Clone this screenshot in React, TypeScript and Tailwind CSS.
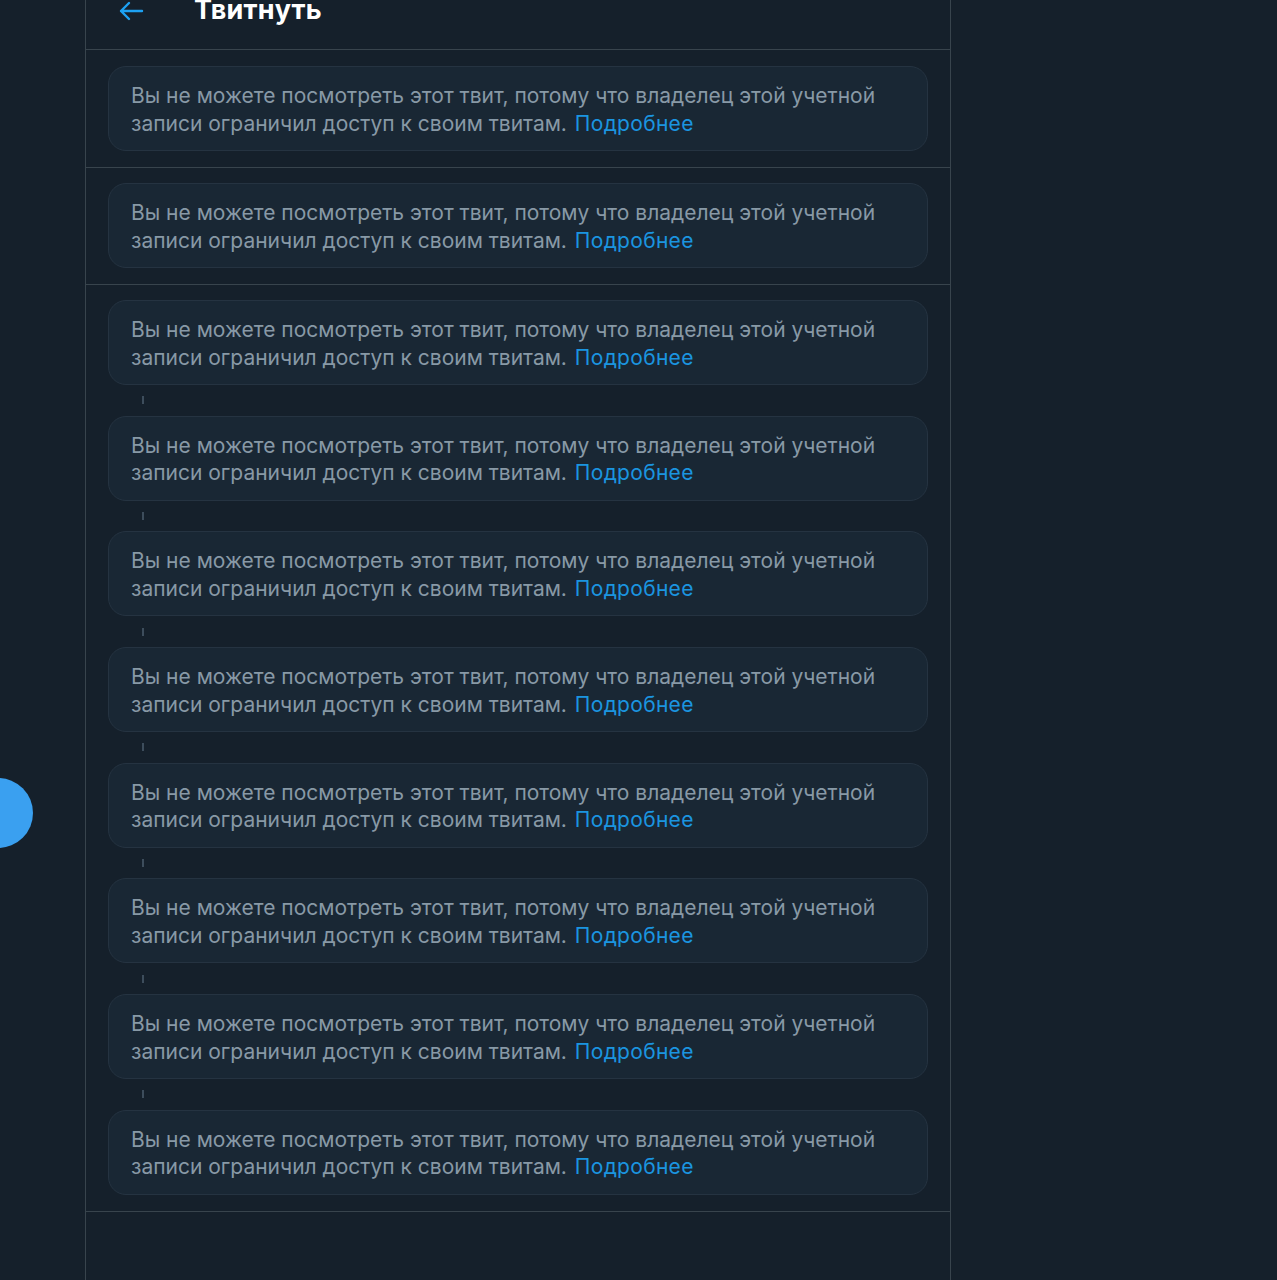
import React from "react";

function Card() {
  return (
    <div className="rounded-[18px] border border-[#253341] bg-[#192734] pl-[22px] pr-[23px] pt-[15px] pb-[13px] text-[21px] leading-[27.5px] text-[#8899a6]">
      Вы не можете посмотреть этот твит, потому что владелец этой учетной записи ограничил доступ к своим твитам.{" "}
      <span className="text-[#1b95e0] tracking-[0.3px] ml-[2px]">Подробнее</span>
    </div>
  );
}

function Connector() {
  return (
    <div className="h-[30.7px] flex items-center pl-[34px]">
      <div className="w-[2px] h-[8px] bg-[#3d4d5c]" />
    </div>
  );
}

export default function App() {
  return (
    <div
      className="relative w-[1277px] h-[1280px] overflow-hidden bg-[#15202b]"
      style={{ fontFamily: "Inter, 'Noto Sans', sans-serif" }}
    >
      <div className="ml-[85px] w-[866px] h-full border-x border-[#38444d]">
        <div className="h-[50px] border-b border-[#38444d] flex items-start">
          <div className="flex items-center h-[24px] -mt-[1px]">
            <svg width="26" height="22" viewBox="0 0 26 22" className="ml-[32px]" fill="none" stroke="#1da1f2" strokeWidth="2.4" strokeLinecap="round" strokeLinejoin="round">
              <path d="M24 11H3M11 3L3 11l8 8" />
            </svg>
            <span className="ml-[50px] text-white font-bold text-[27px] leading-[24px] -mt-[3px] tracking-[0.2px]">Твитнуть</span>
          </div>
        </div>
        <div className="px-[22px] pt-[16px] pb-[16px] border-b border-[#38444d]">
          <Card />
        </div>
        <div className="px-[22px] pt-[15px] pb-[16px] border-b border-[#38444d]">
          <Card />
        </div>
        <div className="px-[22px] pt-[15px] pb-[16px] border-b border-[#38444d]">
          <Card />
          <Connector />
          <Card />
          <Connector />
          <Card />
          <Connector />
          <Card />
          <Connector />
          <Card />
          <Connector />
          <Card />
          <Connector />
          <Card />
          <Connector />
          <Card />
        </div>
      </div>
      <div className="absolute left-[-37px] top-[778px] w-[70px] h-[70px] rounded-full bg-[#3aa0f0]" />
    </div>
  );
}
